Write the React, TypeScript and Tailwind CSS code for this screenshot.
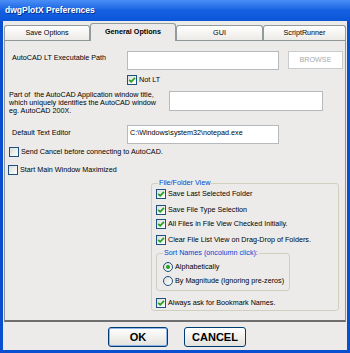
import React from 'react';

type CheckProps = { checked?: boolean; label: string; className?: string };

const CheckBox = ({ checked, label, className }: CheckProps) => (
  <div className={`flex items-center gap-[2px] ${className ?? ''}`}>
    <span className="flex h-[10px] w-[10px] shrink-0 items-center justify-center border border-[#1c5180] bg-gradient-to-br from-[#dcdcd7] to-white">
      {checked && (
        <svg width="8" height="8" viewBox="0 0 8 8">
          <path d="M1.2 3.8l2 2 3.8-4" fill="none" stroke="#21a121" strokeWidth="1.7" />
        </svg>
      )}
    </span>
    <span className="whitespace-nowrap leading-[8px]">{label}</span>
  </div>
);

const Radio = ({ checked, label, className }: CheckProps) => (
  <div className={`flex items-center gap-[2px] ${className ?? ''}`}>
    <span className="flex h-[10px] w-[10px] shrink-0 items-center justify-center rounded-full border border-[#1c5180] bg-gradient-to-br from-[#dcdcd7] to-white">
      {checked && <span className="h-[4px] w-[4px] rounded-full bg-[#21a121]" />}
    </span>
    <span className="whitespace-nowrap leading-[8px]">{label}</span>
  </div>
);

const TextBox = ({ className, value }: { className: string; value?: string }) => (
  <div className={`shrink-0 border border-[#b7babd] bg-white px-[2px] pt-[3px] leading-[8px] ${className}`}>{value}</div>
);

const tabs = [
  { name: 'Save Options', w: 'w-[86px]' },
  { name: 'General Options', w: 'w-[86px]', active: true },
  { name: 'GUI', w: 'w-[87px]' },
  { name: 'ScriptRunner', w: 'w-[83px]' },
];

export default function App() {
  return (
    <div className="flex h-[353px] w-[350px] flex-col bg-[#0a4fd0] font-['Liberation_Sans',Arial,sans-serif] text-[7.2px] text-black">
      {/* title bar */}
      <div className="flex h-[21px] shrink-0 items-center bg-gradient-to-b from-[#4a8ef5] via-[#1560e2] to-[#0b56d8] pl-[5px]">
        <span className="text-[8.5px] font-bold text-white [text-shadow:1px_1px_0_#0a2e8a]">dwgPlotX Preferences</span>
      </div>

      <div className="mx-[3px] mb-[3px] flex flex-1 flex-col bg-[#ecebe9] pt-[2px]">
        {/* tabs */}
        <div className="ml-[1px] flex h-[17px] items-end">
          {tabs.map((t) =>
            t.active ? (
              <div
                key={t.name}
                className={`${t.w} relative z-10 -mb-px flex h-[18px] items-center justify-center rounded-t-[3px] border border-b-0 border-[#919b9c] bg-[#ecebe9] font-bold`}
              >
                {t.name}
              </div>
            ) : (
              <div
                key={t.name}
                className={`${t.w} flex h-[15px] items-center justify-center rounded-t-[3px] border border-b-0 border-[#919b9c] bg-gradient-to-b from-white to-[#eceae6]`}
              >
                {t.name}
              </div>
            )
          )}
        </div>

        {/* panel */}
        <div className="mx-[1px] flex h-[282px] flex-col border border-b-2 border-[#8f9698] border-b-[#6e6e6e] bg-[#ecebe9]">
          <div className="mt-[10px] flex items-start pl-[7px]">
            <span className="mt-[3px] w-[115px] leading-[8px]">AutoCAD LT Executable Path</span>
            <TextBox className="h-[19px] w-[152px]" />
            <div className="ml-[9px] flex h-[18px] w-[55px] items-center justify-center border border-[#c9cbcd] bg-white text-[#a8a8a8]">
              BROWSE
            </div>
          </div>

          <CheckBox checked label="Not LT" className="mt-[5px] pl-[122px]" />

          <div className="mt-[6px] flex items-start pl-[4px]">
            <span className="w-[160px] leading-[8px]">
              Part of&nbsp; the AutoCAD Application window title,
              <br />
              which uniquely identifies the AutoCAD window
              <br />
              eg. AutoCAD 200X.
            </span>
            <TextBox className="h-[20px] w-[154px]" />
          </div>

          <div className="mt-[10px] flex items-start pl-[7px]">
            <span className="mt-[4px] w-[115px] leading-[8px]">Default Text Editor</span>
            <TextBox className="h-[19px] w-[152px]" value="C:\Windows\system32\notepad.exe" />
          </div>

          <CheckBox label="Send Cancel before connecting to AutoCAD." className="mt-[3px] pl-[4px]" />
          <CheckBox label="Start Main Window Maximized" className="mt-[8px] pl-[3px]" />

          <fieldset className="ml-[146px] mt-[4px] h-[132px] w-[188px] rounded-[3px] border border-[#d0d0bf] pl-[4px]">
            <legend className="ml-[2px] px-[1px] leading-[8px] text-[#0046d5]">File/Folder View</legend>
            <CheckBox checked label="Save Last Selected Folder" className="mt-[2px]" />
            <CheckBox checked label="Save File Type Selection" className="mt-[6px]" />
            <CheckBox checked label="All Files in File View Checked Initially." className="mt-[4px]" />
            <CheckBox checked label="Clear File List View on Drag-Drop of Folders." className="mt-[6px]" />

            <fieldset className="mt-[4px] h-[42px] w-[134px] rounded-[3px] border border-[#d0d0bf] pl-[6px]">
              <legend className="px-[1px] leading-[8px] text-[#0046d5]">Sort Names (oncolumn click):</legend>
              <Radio checked label="Alphabetically" className="mt-[5px]" />
              <Radio label="By Magnitude (Ignoring pre-zeros)" className="mt-[4px]" />
            </fieldset>

            <CheckBox checked label="Always ask for Bookmark Names." className="mt-[7px]" />
          </fieldset>
        </div>

        {/* buttons */}
        <div className="mt-[5px] flex gap-[16px] pl-[105px]">
          <div className="flex h-[20px] w-[60px] items-center justify-center rounded-[3px] border border-[#003c74] bg-gradient-to-b from-white to-[#e3e2dc] text-[11px] font-bold shadow-[inset_0_0_0_1px_#8fb4ec]">
            OK
          </div>
          <div className="flex h-[20px] w-[62px] items-center justify-center rounded-[3px] border border-[#003c74] bg-gradient-to-b from-white to-[#e3e2dc] text-[11px] font-bold">
            CANCEL
          </div>
        </div>
      </div>
    </div>
  );
}
